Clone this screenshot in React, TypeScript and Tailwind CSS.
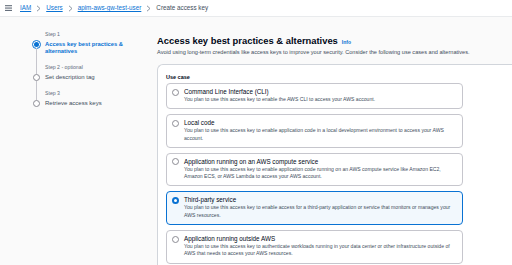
import React from "react";

const font = { fontFamily: '"Liberation Sans", Arial, sans-serif' };

function Chevron() {
  return (
    <svg width="5" height="7" viewBox="0 0 5 7" className="mx-[5px]">
      <path d="M1 0.8 L4 3.5 L1 6.2" fill="none" stroke="#7d8998" strokeWidth="0.9" />
    </svg>
  );
}

type StepProps = {
  label: string;
  title: React.ReactNode;
  active?: boolean;
  first?: boolean;
  last?: boolean;
};

function Step({ label, title, active, first, last }: StepProps) {
  return (
    <div className="flex">
      <div className="flex flex-col items-center w-[9px] mr-[4px]">
        <div className={first ? "w-px h-[10px]" : "w-px h-[10px] bg-[#c6c6cd]"} />
        {active ? (
          <div className="w-[9px] h-[9px] -my-[1px] rounded-full border border-[#0972d3] flex items-center justify-center bg-white">
            <div className="w-[5px] h-[5px] rounded-full bg-[#0972d3]" />
          </div>
        ) : (
          <div className="w-[7px] h-[7px] rounded-full border border-[#8c8c94] bg-white" />
        )}
        <div className={last ? "w-px flex-1" : "w-px flex-1 bg-[#c6c6cd]"} />
      </div>
      <div className={last ? "" : "pb-[9px]"}>
        <div className="text-[5.2px] leading-[7px] text-[#5f6b7a]">{label}</div>
        <div
          className={
            active
              ? "mt-[3px] text-[5.8px] leading-[7px] font-bold text-[#0972d3]"
              : "mt-[3px] text-[6px] leading-[7px] text-[#414d5c]"
          }
        >
          {title}
        </div>
      </div>
    </div>
  );
}

type OptProps = { title: string; desc: React.ReactNode; selected?: boolean };

function Option({ title, desc, selected }: OptProps) {
  return (
    <div
      className={
        selected
          ? "flex rounded-[4px] border border-[#0972d3] bg-[#f2f8fd] pt-[4px] pb-[5px] pl-[5px] pr-[8px]"
          : "flex rounded-[4px] border border-[#c6c6cd] bg-white pt-[4px] pb-[5px] pl-[5px] pr-[8px]"
      }
    >
      <div className="h-[8px] flex items-center w-[7px] mr-[5px] shrink-0">
        {selected ? (
          <div className="w-[7px] h-[7px] rounded-full border-[2px] border-[#0972d3] bg-white" />
        ) : (
          <div className="w-[7px] h-[7px] rounded-full border border-[#8c8c94] bg-white" />
        )}
      </div>
      <div>
        <div className="text-[6.3px] leading-[8px] text-[#000716]">{title}</div>
        <div className="text-[5.1px] leading-[7.3px] text-[#414d5c]">{desc}</div>
      </div>
    </div>
  );
}

export default function App() {
  return (
    <div style={font} className="w-[512px] h-[265px] overflow-hidden bg-[#fafafa] flex flex-col">
      <div className="h-[17px] shrink-0 bg-white border-b border-[#e9ebed] flex items-center pl-[5px]">
        <svg width="7" height="6" viewBox="0 0 7 6" className="mr-[8px]">
          <rect x="0" y="0.3" width="7" height="0.9" fill="#414d5c" />
          <rect x="0" y="2.6" width="7" height="0.9" fill="#414d5c" />
          <rect x="0" y="4.9" width="7" height="0.9" fill="#414d5c" />
        </svg>
        <span className="text-[6.3px] text-[#0972d3] underline">IAM</span>
        <Chevron />
        <span className="text-[6.3px] text-[#0972d3] underline">Users</span>
        <Chevron />
        <span className="text-[6.3px] text-[#0972d3] underline">apim-aws-gw-test-user</span>
        <Chevron />
        <span className="text-[6.3px] text-[#414d5c]">Create access key</span>
      </div>
      <div className="flex flex-1 min-h-0">
        <div className="w-[157px] shrink-0 pl-[32px] pt-[14px]">
          <Step
            first
            active
            label="Step 1"
            title={
              <>
                Access key best practices &amp;
                <br />
                alternatives
              </>
            }
          />
          <Step label="Step 2 - optional" title="Set description tag" />
          <Step last label="Step 3" title="Retrieve access keys" />
        </div>
        <div className="flex-1 pt-[17px] min-w-0">
          <div className="flex items-baseline">
            <h1 className="text-[9.4px] leading-[14px] font-bold text-[#000716] whitespace-nowrap">
              Access key best practices &amp; alternatives
            </h1>
            <span className="ml-[4px] text-[5px] font-bold text-[#0972d3]">Info</span>
          </div>
          <div className="text-[5.6px] leading-[8px] text-[#414d5c] whitespace-nowrap">
            Avoid using long-term credentials like access keys to improve your security. Consider the following use cases and alternatives.
          </div>
          <div className="mt-[8px] w-[380px] rounded-l-[6px] border border-r-0 border-[#d1d5db] bg-white pl-[8px] pt-[9px] pb-[10px]">
            <div className="text-[5.5px] leading-[7px] font-bold text-[#000716] mb-[2px]">Use case</div>
            <div className="w-[297px] flex flex-col gap-[5px]">
              <Option
                title="Command Line Interface (CLI)"
                desc="You plan to use this access key to enable the AWS CLI to access your AWS account."
              />
              <Option
                title="Local code"
                desc="You plan to use this access key to enable application code in a local development environment to access your AWS account."
              />
              <Option
                title="Application running on an AWS compute service"
                desc="You plan to use this access key to enable application code running on an AWS compute service like Amazon EC2, Amazon ECS, or AWS Lambda to access your AWS account."
              />
              <Option
                selected
                title="Third-party service"
                desc="You plan to use this access key to enable access for a third-party application or service that monitors or manages your AWS resources."
              />
              <Option
                title="Application running outside AWS"
                desc="You plan to use this access key to authenticate workloads running in your data center or other infrastructure outside of AWS that needs to access your AWS resources."
              />
            </div>
          </div>
        </div>
      </div>
    </div>
  );
}
